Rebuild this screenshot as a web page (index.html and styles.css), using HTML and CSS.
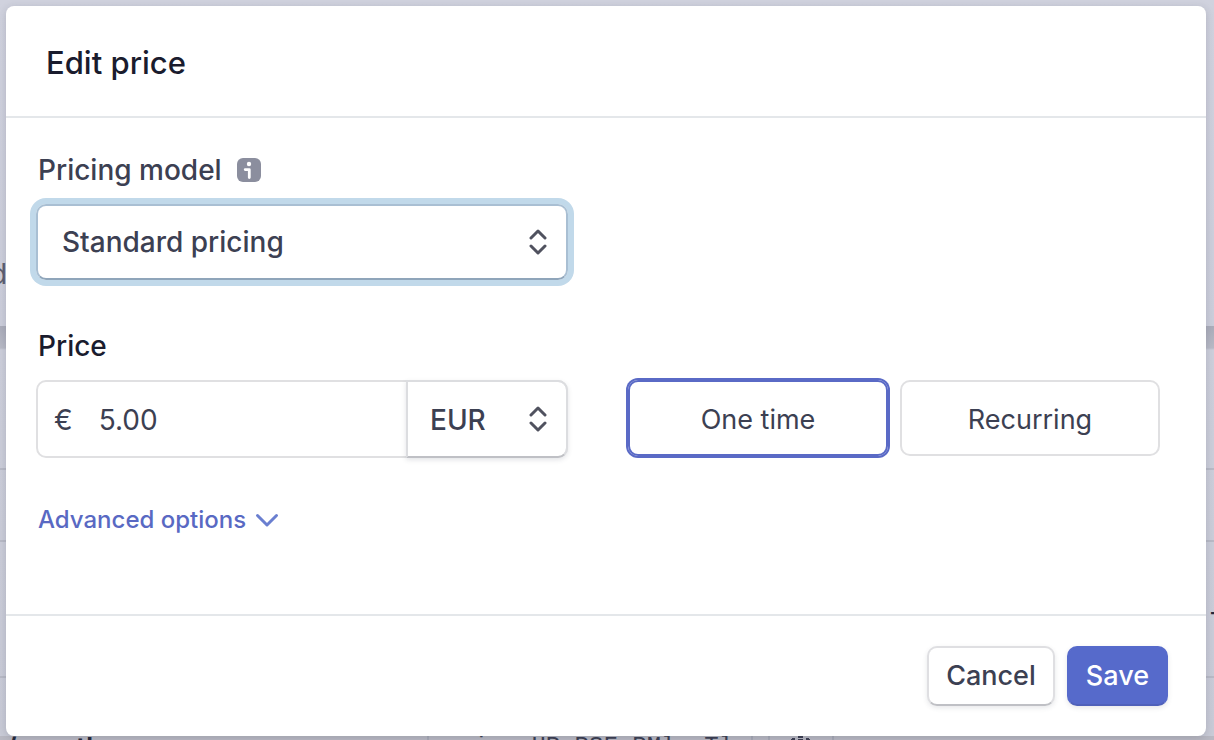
FILE: index.html
```html
<!DOCTYPE html>
<html lang="en">
<head>
<meta charset="utf-8">
<title>Edit price</title>
<link rel="stylesheet" href="styles.css">
</head>
<body>
<div class="backdrop" aria-hidden="true">
  <div class="panel-top"><span class="cut-word">d</span></div>
  <div class="rows"><i class="rule first"></i><i class="rule"></i><i class="rule last"></i></div>
  <span class="dash">-</span>
  <div class="strip">
    <span class="period">/month</span>
    <code class="price-id">price_HPzPSFnPMlroTl</code>
    <span class="copy"><svg width="24" height="24" viewBox="0 0 24 24" fill="none" stroke="#3c3f52" stroke-width="2"><path d="M4 3h3M10 1h5M10 4h5M18 3h3M4 3v20h17V3"/></svg></span>
  </div>
</div>
<main class="dialog" role="dialog" aria-labelledby="dialog-title">
  <header class="dialog-header"><h1 id="dialog-title">Edit price</h1></header>
  <form class="dialog-body">
    <div class="label-row">
      <label class="label" for="model">Pricing model</label>
      <svg class="info" width="24" height="24" viewBox="0 0 24 24" role="img" aria-label="Information"><rect width="24" height="24" rx="6" fill="#8b8e9e"/><circle cx="12" cy="6" r="2.2" fill="#fff"/><path d="M8.2 11.6h4.1v8" fill="none" stroke="#fff" stroke-width="2.8" stroke-linecap="round" stroke-linejoin="round"/></svg>
    </div>
    <div class="columns">
      <div class="select model-select">
        <select id="model"><option>Standard pricing</option></select>
        <svg class="arrows" width="20" height="26" viewBox="0 0 20 26"><path d="M3 9 10 2l7 7M3 17l7 7 7-7"/></svg>
      </div>
    </div>
    <label class="label strong" for="amount">Price</label>
    <div class="columns">
      <div class="money">
        <span class="currency-sign">€</span>
        <input id="amount" class="amount" type="text" value="5.00">
        <div class="select currency-select">
          <select aria-label="Currency"><option>EUR</option></select>
          <svg class="arrows" width="20" height="26" viewBox="0 0 20 26"><path d="M3 9 10 2l7 7M3 17l7 7 7-7"/></svg>
        </div>
      </div>
      <div class="choices" role="radiogroup" aria-label="Billing">
        <label class="choice"><input type="radio" name="billing" checked>One time</label>
        <label class="choice"><input type="radio" name="billing">Recurring</label>
      </div>
    </div>
    <button class="advanced" type="button">Advanced options
      <svg width="24" height="16" viewBox="0 0 24 16"><path d="M2.500 3.500 12 13l9.500-9.500"/></svg>
    </button>
  </form>
  <footer class="dialog-footer">
    <button class="button" type="button">Cancel</button>
    <button class="button primary" type="button">Save</button>
  </footer>
</main>
</body>
</html>
```
FILE: styles.css
```css
* { box-sizing: border-box; }
body {
  margin: 0;
  min-height: 100vh;
  display: flex;
  padding: 6px 8px 4px 6px;
  font-family: Inter, "Liberation Sans", sans-serif;
  font-size: 28px;
  line-height: 36px;
  color: #3c4052;
  background: #cbcdd8;
}
button, input, select { font: inherit; color: inherit; }

.backdrop { position: absolute; inset: 0; overflow: hidden; }
.panel-top {
  height: 326px;
  padding-top: 256px;
  background: linear-gradient(#d0d2de, #cccedb);
}
.cut-word { display: block; margin-left: -10px; color: #5c5f70; }
.rows {
  height: 410px;
  background: linear-gradient(#abadba, #b8bac6 22px, #cdcfdb 24px, #c9cbd7);
}
.rule { position: relative; top: 212px; display: block; height: 2px; background: #b8bac6; }
.rule.first { top: 142px; }
.rule.last { top: 346px; }
.dash { position: absolute; right: -8px; top: 594px; color: #25283a; }
.strip {
  position: absolute;
  inset: auto 0 0;
  height: 4px;
  overflow: hidden;
  background: #b9b9c3;
}
.period { position: absolute; left: 6px; top: -6px; font-weight: 600; color: #25283a; }
.price-id {
  position: absolute;
  left: 427px;
  top: -7px;
  width: 326px;
  padding-left: 16px;
  border: solid #a8aab6;
  border-width: 0 2px;
  font: 24px/36px "Liberation Mono", monospace;
  color: #3c3f52;
}
.copy {
  position: absolute;
  left: 768px;
  top: 0;
  width: 66px;
  padding-left: 18px;
  border: solid #a8aab6;
  border-width: 0 2px;
  line-height: 0;
}

.dialog {
  position: relative;
  flex: 1;
  min-width: 0;
  display: flex;
  flex-direction: column;
  background: #fff;
  border-radius: 8px;
  box-shadow: 0 2px 8px rgba(40, 42, 60, .18);
}
.dialog-header { padding: 39px 40px 35px; border-bottom: 2px solid #e4e7ea; }
h1 { margin: 0; font-size: 31px; line-height: 36px; font-weight: 500; color: #1a1c2e; }
.dialog-body { flex: 1; padding: 34px 46px 0 30px; }
.label-row { display: flex; align-items: center; gap: 15px; margin-bottom: 16px; }
.label { padding-left: 2px; font-weight: 500; }
.label.strong { display: block; margin: 48px 0 16px; color: #1a1c2e; }
.columns {
  display: grid;
  grid-template-columns: minmax(0, 1fr) minmax(0, 1fr);
  column-gap: 60px;
  align-items: start;
}

.select { position: relative; display: flex; }
.select select {
  appearance: none;
  width: 100%;
  border: 0;
  outline: 0;
  background: transparent;
  font-weight: 500;
}
.arrows {
  position: absolute;
  right: 18px;
  top: calc(50% - 13px);
  pointer-events: none;
  fill: none;
  stroke: #50525f;
  stroke-width: 3;
  stroke-linecap: round;
  stroke-linejoin: round;
}
.model-select {
  height: 76px;
  border: 2px solid #a9bfd3;
  border-bottom-color: #8fa5ba;
  border-radius: 10px;
  box-shadow: 0 0 0 6px #c1d9ea;
}
.model-select select { padding: 0 56px 0 24px; }

.money {
  display: flex;
  align-items: center;
  height: 78px;
  padding-top: 2px;
  border: 2px solid #e0e0e2;
  border-radius: 10px;
}
.currency-sign { padding-left: 16px; }
.amount {
  flex: 1;
  min-width: 0;
  padding: 0 26px;
  border: 0;
  outline: 0;
  background: transparent;
}
.currency-select {
  width: 162px;
  height: 78px;
  margin: -4px -2px -2px;
  border: 2px solid #dcdde0;
  border-bottom-color: #bfc0c5;
  border-radius: 0 10px 10px 0;
  box-shadow: 0 2px 5px rgba(60, 64, 82, .14);
}
.currency-select select { padding: 2px 52px 0 22px; }

.choices { display: grid; grid-template-columns: 1fr 1fr; gap: 12px; }
.choice {
  display: flex;
  align-items: center;
  justify-content: center;
  height: 76px;
  padding-top: 4px;
  border: 2px solid #e0e0e2;
  border-radius: 10px;
  font-size: 27px;
}
.choice input { appearance: none; position: absolute; margin: 0; }
.choice:has(input:checked) { border-color: #5a6ac6; box-shadow: 0 0 0 2px #5a6ac6; }

.advanced {
  display: flex;
  align-items: center;
  gap: 9px;
  margin-top: 44px;
  padding: 0 2px;
  border: 0;
  background: none;
  font-size: 24px;
  font-weight: 500;
  color: #5969c3;
}
.advanced svg { fill: none; stroke: #6a7fd0; stroke-width: 3; stroke-linecap: round; stroke-linejoin: round; }

.dialog-footer {
  display: flex;
  justify-content: flex-end;
  gap: 12px;
  padding: 30px 38px;
  border-top: 2px solid #e4e7ea;
}
.button {
  height: 60px;
  padding: 0 17px;
  border: 2px solid #dfdfe2;
  border-bottom-color: #bfc0c5;
  border-radius: 10px;
  background: #fff;
  font-size: 27px;
  font-weight: 500;
  box-shadow: 0 2px 5px rgba(60, 64, 82, .12);
}
.button.primary { border-color: #566acb; border-bottom-color: #4f61ba; background: #566acb; color: #fff; }
```
